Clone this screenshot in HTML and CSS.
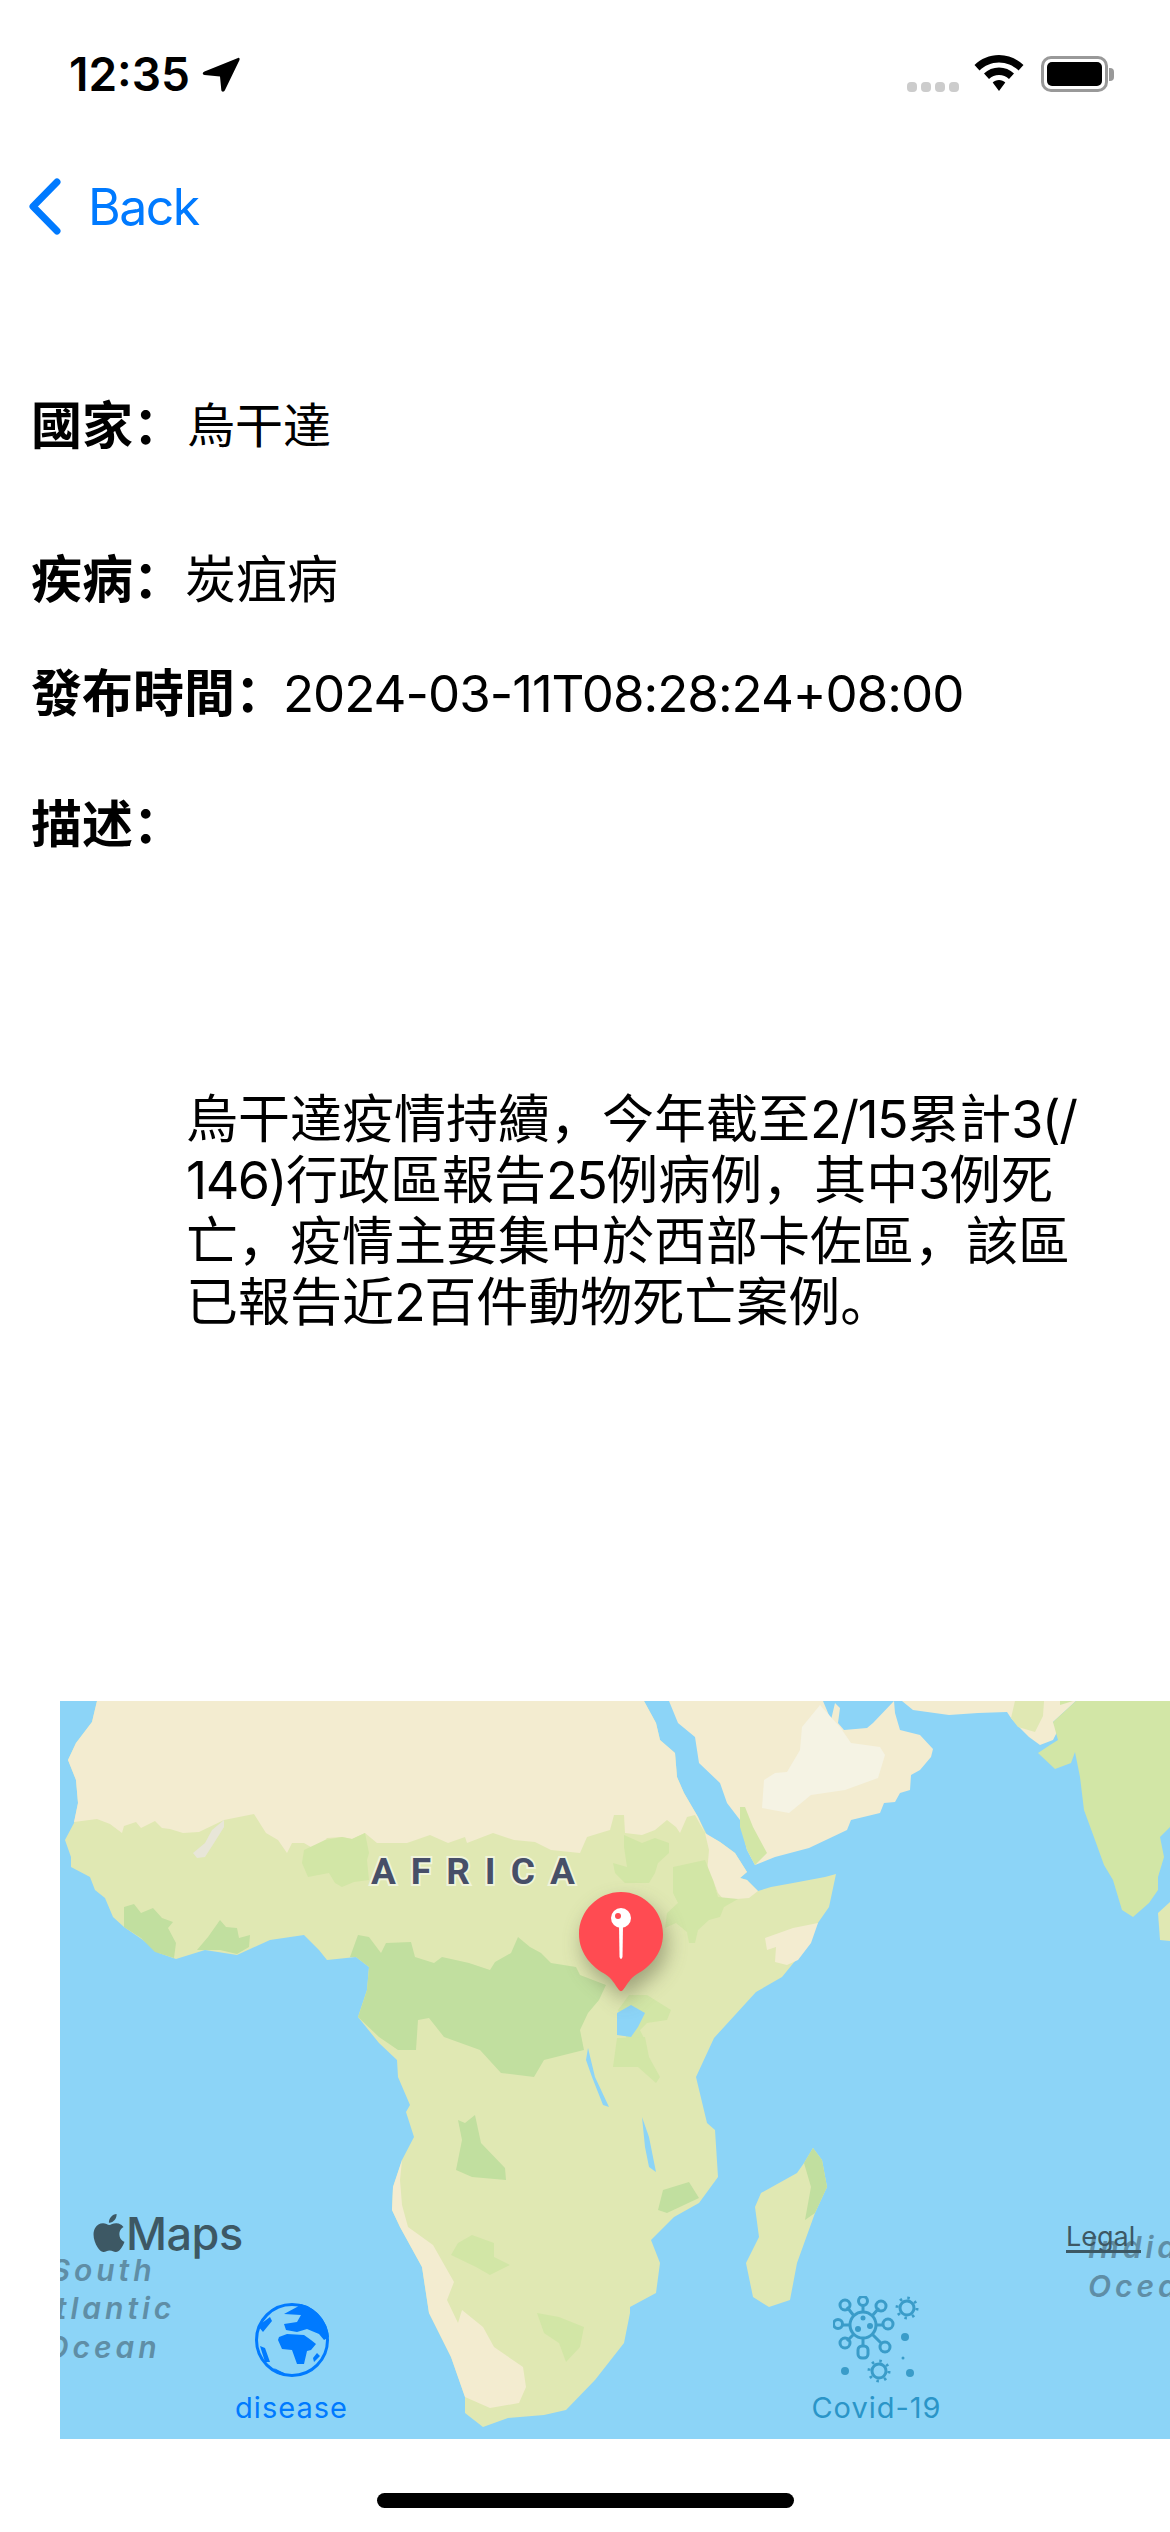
FILE: index.html
```html
<!DOCTYPE html>
<html>
<head>
  <meta charset="utf-8">
  <title>疫情詳情</title>
  <link rel="stylesheet" href="styles.css">
</head>
<body>
  <div class="page">
    <div class="status-bar">
      <div class="status-left">
        <span class="time">12:35</span>
        <svg class="location-arrow" viewBox="0 0 38 36"><path d="M36 1 C37 0.500 38 1.500 37.500 3 L23 33 C22 35.500 19.500 35 19.300 33 L18 19.500 L2.500 18 C0.500 17.800 0 15.500 2.500 14.500 Z"/></svg>
      </div>
      <div class="status-right">
        <div class="signal"><i></i><i></i><i></i><i></i></div>
        <svg class="wifi" viewBox="0 0 50 36"><path d="M25 0 C34.500 0 43 3.800 49.500 10 L44.500 15.500 C39.500 10.600 32.500 7.500 25 7.500 C17.500 7.500 10.500 10.600 5.500 15.500 L0.500 10 C7 3.800 15.500 0 25 0 Z M25 12.500 C30.800 12.500 36 14.800 40 18.500 L35 24 C32.300 21.500 28.800 20 25 20 C21.200 20 17.700 21.500 15 24 L10 18.500 C14 14.800 19.200 12.500 25 12.500 Z M25 25 C27.500 25 29.700 25.900 31.300 27.500 L25 36 L18.700 27.500 C20.300 25.900 22.500 25 25 25 Z"/></svg>
        <div class="battery"><div class="battery-fill"></div></div>
        <div class="battery-cap"></div>
      </div>
    </div>

    <div class="nav-bar">
      <svg class="back-chevron" viewBox="0 0 33 57"><path d="M29 4 L5 28.500 L29 53"/></svg>
      <span class="back-label">Back</span>
    </div>

    <div class="details">
      <div class="row row-country"><span class="label">國家&#xFF1A;</span><span class="value">烏干達</span></div>
      <div class="row row-disease"><span class="label">疾病&#xFF1A;</span><span class="value value-large">炭疽病</span></div>
      <div class="row row-time"><span class="label">發布時間&#xFF1A;</span><span class="timestamp">2024-03-11T08:28:24+08:00</span></div>
      <div class="row row-desc"><span class="label">描述&#xFF1A;</span></div>
      <p class="description">烏干達疫情持續&#xFF0C;今年截至<span class="num">2/15</span>累計<span class="num">3(/</span><br><span class="num">146)</span>行政區報告<span class="num">25</span>例病例&#xFF0C;其中<span class="num">3</span>例死<br>亡&#xFF0C;疫情主要集中於西部卡佐區&#xFF0C;該區<br>已報告近<span class="num">2</span>百件動物死亡案例。</p>
    </div>

    <div class="map">
      <svg class="map-canvas" viewBox="60 1701 1110 738">
        <rect class="water" x="60" y="1701" width="1110" height="738"/>

        <!-- Africa -->
        <polygon class="pale" points="97,1701 92,1722 76,1743 68,1760 76,1780 78,1803 74,1823 65,1840 71,1857 71,1867 90,1877 95,1890 105,1898 113,1917 124,1927 143,1940 159,1953 176,1959 205,1950 237,1955 270,1940 304,1935 319,1950 327,1960 356,1957 369,1967 367,1990 358,2017 379,2043 397,2060 398,2077 410,2105 406,2112 414,2137 402,2160 393,2187 392,2210 400,2227 422,2267 429,2313 451,2357 465,2397 465,2413 483,2427 508,2418 544,2415 566,2410 595,2380 624,2343 630,2313 630,2307 656,2293 660,2263 651,2240 674,2217 699,2203 718,2177 715,2130 707,2123 696,2077 714,2038 756,1992 782,1977 804,1950 813,1930 829,1907 836,1874 825,1877 793,1883 771,1887 758,1891 747,1880 740,1878 747,1872 735,1853 720,1842 707,1835 698,1817 684,1793 677,1777 675,1753 660,1740 656,1723 644,1701"/>
        <polygon class="cream" points="97,1701 92,1722 76,1743 68,1760 76,1780 78,1803 74,1822 97,1819 110,1824 122,1833 124,1826 136,1822 141,1828 155,1821 162,1828 170,1829 183,1833 199,1832 224,1820 254,1814 266,1833 278,1840 287,1853 292,1843 304,1843 316,1850 327,1838 342,1837 352,1839 365,1833 377,1843 407,1843 430,1835 448,1843 465,1837 467,1843 493,1833 514,1840 535,1842 551,1850 580,1853 587,1837 600,1833 610,1830 614,1815 624,1815 625,1833 642,1835 655,1830 667,1820 676,1827 680,1833 687,1817 695,1815 705,1833 698,1817 684,1793 677,1777 675,1753 660,1740 656,1723 644,1701"/>
        <polygon class="cream" points="705,1833 720,1842 735,1853 747,1872 740,1878 747,1880 758,1891 749,1898 724,1900 718,1893 713,1880 707,1873 709,1850"/>
        <polygon class="cream" points="765,1938 793,1928 818,1923 811,1943 798,1960 787,1965 775,1962 776,1947 767,1950"/>
        <polygon class="cream" points="402,2160 393,2187 392,2210 400,2227 422,2267 429,2313 451,2357 465,2397 490,2408 519,2403 526,2387 523,2367 494,2347 483,2327 462,2310 458,2323 447,2300 454,2282 433,2245 408,2227 402,2205 400,2180"/>
        <polygon class="grey" points="193,1853 205,1843 212,1830 224,1820 224,1827 214,1843 205,1857 197,1858"/>
        <polygon class="green" points="124,1907 134,1904 141,1913 153,1908 162,1918 173,1922 168,1928 176,1943 174,1958 155,1952 141,1938 124,1927"/>
        <polygon class="green" points="197,1950 208,1937 220,1920 226,1927 237,1928 239,1938 250,1935 249,1947 237,1954 220,1950"/>
        <polygon class="light" points="302,1863 304,1850 325,1840 342,1837 352,1839 365,1833 369,1853 367,1860 369,1880 354,1882 342,1887 335,1883 329,1873 308,1877"/>
        <polygon class="green" points="350,1957 358,1935 369,1937 381,1953 386,1943 411,1942 415,1957 434,1963 442,1957 469,1963 490,1970 495,1962 511,1953 518,1937 530,1947 541,1953 551,1963 576,1967 580,1975 606,1985 599,2000 588,2013 580,2030 584,2050 544,2060 534,2077 501,2073 480,2050 444,2037 429,2018 418,2020 416,2050 398,2050 379,2037 358,2017 367,1990 369,1967 356,1957"/>
        <polygon class="light" points="624,1835 642,1843 655,1838 669,1843 669,1853 658,1863 655,1873 649,1883 625,1883 615,1873 613,1863 627,1867 624,1847"/>
        <polygon class="light" points="673,1867 705,1860 713,1880 718,1897 738,1899 724,1907 720,1917 709,1920 698,1930 695,1943 689,1943 687,1932 676,1923 665,1928 667,1913 678,1903 673,1893"/>
        <polygon class="light" points="629,1995 647,1995 671,2010 667,2020 647,2023 640,2030 645,2040 627,2040 618,2010"/>
        <polygon class="light" points="617,2038 645,2037 649,2057 660,2077 656,2083 638,2067 613,2067"/>
        <polygon class="green" points="475,2115 481,2143 505,2168 506,2180 472,2177 456,2170 462,2140 458,2120 465,2123"/>
        <polygon class="green" points="689,2182 699,2198 667,2213 658,2210 663,2190"/>
        <polygon class="light" points="472,2235 494,2243 494,2257 510,2265 490,2275 476,2267 451,2255 458,2243"/>
        <polygon class="light" points="537,2313 559,2317 584,2327 580,2347 566,2362 559,2343 544,2333"/>
        <polygon class="water" points="631,2005 645,2013 638,2027 631,2037 617,2035 617,2013"/>
        <polygon class="water" points="588,2048 595,2077 609,2107 603,2105 592,2077 586,2060"/>
        <polygon class="water" points="642,2117 649,2137 656,2172 649,2167 645,2147"/>

        <!-- Madagascar -->
        <polygon class="pale" points="813,2148 822,2160 827,2187 815,2213 797,2263 790,2300 769,2307 753,2297 746,2263 759,2237 755,2207 761,2193 797,2173 804,2163"/>
        <polygon class="green" points="813,2148 822,2160 827,2187 815,2213 805,2220 811,2187 804,2163"/>

        <!-- Arabia and Asia -->
        <polygon class="cream" points="669,1701 678,1723 695,1737 699,1763 720,1783 727,1803 740,1820 747,1850 755,1865 775,1857 809,1848 847,1830 851,1820 880,1813 884,1803 895,1802 900,1793 910,1790 911,1775 920,1770 931,1757 933,1749 920,1735 900,1730 895,1713 894,1701 873,1723 867,1728 844,1730 838,1723 840,1708 835,1703 831,1720 823,1701"/>
        <polygon class="sand" points="782,1701 802,1727 820,1705 840,1727 851,1743 880,1747 885,1755 878,1778 845,1790 811,1795 789,1813 762,1808 764,1780 775,1773 787,1772 800,1750 802,1727"/>
        <polygon class="light" points="740,1807 745,1807 753,1827 767,1853 755,1865 747,1850 740,1827"/>
        <polygon class="cream" points="902,1701 913,1710 949,1715 978,1713 1007,1712 1011,1718 1020,1728 1029,1737 1040,1745 1053,1740 1058,1730 1053,1722 1076,1701"/>
        <polygon class="pale" points="1015,1701 1044,1701 1043,1716 1035,1732 1018,1727 1011,1718"/>
        <polygon class="light" points="1060,1701 1073,1701 1060,1705"/>
        <polygon class="light" points="1076,1701 1170,1701 1170,1827 1160,1837 1164,1857 1158,1877 1158,1890 1149,1903 1133,1917 1122,1910 1113,1880 1104,1865 1095,1840 1084,1810 1080,1777 1075,1752 1071,1763 1055,1769 1038,1753 1050,1745 1058,1740 1053,1722"/>
        <polygon class="pale" points="1170,1902 1158,1913 1160,1940 1170,1941"/>

        <!-- map labels -->
        <text class="place africa" x="371" y="1884">AFRICA</text>
        <text class="sea" text-anchor="middle" x="103" y="2281">South</text>
        <text class="sea" text-anchor="middle" x="103" y="2319">Atlantic</text>
        <text class="sea" text-anchor="middle" x="103" y="2358">Ocean</text>
        <text class="sea" x="1088" y="2258">Indian</text>
        <text class="sea" x="1088" y="2297">Ocean</text>

        <!-- attribution -->
        <svg class="apple" x="90" y="2214" width="38" height="38" viewBox="0 0 24 24"><path d="M12.152 6.896c-.948 0-2.415-1.078-3.96-1.04-2.04.027-3.91 1.183-4.961 3.014-2.117 3.675-.546 9.103 1.519 12.09 1.013 1.454 2.208 3.09 3.792 3.039 1.52-.065 2.09-.987 3.935-.987 1.831 0 2.35.987 3.96.948 1.637-.026 2.676-1.48 3.676-2.948 1.156-1.688 1.636-3.325 1.662-3.415-.039-.013-3.182-1.221-3.22-4.857-.026-3.04 2.48-4.494 2.597-4.559-1.429-2.09-3.623-2.324-4.39-2.376-2-.156-3.675 1.09-4.61 1.09zM15.53 3.83c.843-1.012 1.4-2.427 1.245-3.83-1.207.052-2.662.805-3.532 1.818-.78.896-1.454 2.338-1.273 3.714 1.338.104 2.715-.688 3.559-1.701"/></svg>
        <text class="maps-word" x="126" y="2250">Maps</text>
        <text class="legal" x="1066" y="2246">Legal</text>
        <rect class="legal-line" x="1066" y="2250" width="75" height="3"/>

        <!-- pin -->
        <g class="pin">
          <path class="pin-body" d="M621 1892 C644 1892 663 1911 663 1934 C663 1955 648 1968 637 1974 C630 1978 627 1985 623 1990 C622 1991.500 620 1991.500 619 1990 C615 1985 612 1978 605 1974 C594 1968 579 1955 579 1934 C579 1911 598 1892 621 1892 Z"/>
          <circle class="pin-head" cx="621" cy="1918" r="10"/>
          <path class="pin-head" d="M619 1925 H623 L622.500 1957 Q621 1961 619.500 1957 Z"/>
          <circle class="pin-hole" cx="618" cy="1916" r="3"/>
        </g>
      </svg>

      <div class="tabs">
        <div class="tab tab-disease">
          <svg class="tab-icon globe" viewBox="0 0 76 76">
            <circle class="globe-ring" cx="38" cy="38" r="35.500"/>
            <path d="M47 2 C60 5 73 17 75 35 L70 38 L65 32 L53 27 L43 30 L32 28 L30 22 L43 20 L47 13 L30 12 L43 5 Z"/>
            <path d="M25 35 L33 32 L50 33 L57 38 L62 42 L57 48 L53 49 L50 62 L43 62 L38 48 L28 47 L24 38 Z"/>
            <path d="M4 24 L16 15 L18 19 L9 30 Z M6 44 L11 46 L16 60 L11 60 Z M63 51 L66 54 L60 60 L59 56 Z M20 66 L30 71 L26 73 Z"/>
          </svg>
          <span>disease</span>
        </div>
        <div class="tab tab-covid">
          <svg class="tab-icon virus" viewBox="0 0 88 88">
            <circle class="virus-line" cx="30" cy="29" r="13"/>
            <path class="virus-line" d="M21 20 L14 11 M30 16 V9 M39 20 L46 12 M43 29 H51 M39 38 L48 47 M30 42 V50 M21 38 L14 45 M17 29 H10"/>
            <circle class="virus-line" cx="12" cy="9" r="5"/>
            <circle class="virus-line" cx="30" cy="5" r="4.500"/>
            <circle class="virus-line" cx="48" cy="10" r="5"/>
            <circle class="virus-line" cx="55" cy="28" r="5"/>
            <circle class="virus-line" cx="52" cy="51" r="5"/>
            <rect class="virus-line" x="25" y="50" width="10" height="12" rx="4"/>
            <circle class="virus-line" cx="12" cy="47" r="5"/>
            <circle class="virus-line" cx="5" cy="28" r="4.500"/>
            <circle class="virus-dot" cx="30" cy="22" r="2.500"/>
            <circle class="virus-dot" cx="25" cy="33" r="3"/>
            <circle class="virus-dot" cx="37" cy="30" r="3"/>
            <circle class="virus-line" cx="74" cy="12" r="7"/>
            <circle class="virus-spikes" cx="74" cy="12" r="10"/>
            <circle class="virus-line" cx="46" cy="75" r="7"/>
            <circle class="virus-spikes" cx="46" cy="75" r="10"/>
            <circle class="virus-dot" cx="72" cy="41" r="4"/>
            <circle class="virus-dot" cx="12" cy="75" r="4"/>
            <circle class="virus-dot" cx="77" cy="77" r="4"/>
            <circle class="virus-dot" cx="70" cy="62" r="1.500"/>
          </svg>
          <span>Covid-19</span>
        </div>
      </div>
    </div>

    <div class="home-indicator"></div>
  </div>
</body>
</html>
```

FILE: styles.css
```css
/* page */
body {
  margin: 0;
  background: #fff;
  color: #000;
  font-family: Inter, "Noto Sans CJK SC", sans-serif;
}

.page {
  width: 1170px;
  height: 2532px;
  overflow: hidden;
  display: flex;
  flex-direction: column;
}

/* status bar */
.status-bar {
  height: 150px;
  box-sizing: border-box;
  padding: 55px 56px 0 69px;
  display: flex;
  justify-content: space-between;
  align-items: flex-start;
}

.status-left {
  display: flex;
  align-items: center;
  gap: 12px;
}

.time {
  font-size: 46px;
  line-height: 38px;
  font-weight: 600;
}

.location-arrow {
  width: 38px;
  height: 36px;
  margin-top: 2px;
}

.status-right {
  display: flex;
  align-items: flex-start;
}

.signal {
  display: flex;
  gap: 4px;
  margin-top: 27px;
  margin-right: 15px;
}

.signal i {
  width: 10px;
  height: 10px;
  border-radius: 4px;
  background: #ccc;
}

.wifi {
  width: 50px;
  height: 36px;
  margin-right: 17px;
}

.battery {
  width: 67px;
  height: 36px;
  box-sizing: border-box;
  border: 3px solid #999;
  border-radius: 10px;
  padding: 3px;
  margin-top: 1px;
}

.battery-fill {
  height: 100%;
  background: #000;
  border-radius: 5px;
}

.battery-cap {
  width: 5px;
  height: 13px;
  margin: 13px 0 0 1px;
  background: #999;
  border-radius: 0 4px 4px 0;
}

/* nav */
.nav-bar {
  height: 120px;
  box-sizing: border-box;
  padding: 26px 0 0 28px;
  display: flex;
  align-items: flex-start;
  gap: 27px;
  color: #007aff;
}

.back-chevron {
  width: 33px;
  height: 57px;
  margin-top: 2px;
  fill: none;
  stroke: #007aff;
  stroke-width: 7;
  stroke-linecap: round;
  stroke-linejoin: round;
}

.back-label {
  font-size: 50px;
  line-height: 62px;
  letter-spacing: -1.500px;
}

/* detail rows */
.details {
  padding-left: 31px;
  font-size: 51px;
  height: 1431px;
}

.row {
  height: 60px;
  line-height: 60px;
  display: flex;
}

.row-country { margin-top: 126px; }
.row-disease { margin-top: 94px; }
.row-time { margin-top: 54px; }
.row-desc { margin-top: 71px; }

.label {
  font-weight: 700;
}

.value {
  font-size: 48px;
  margin-left: 3px;
}

.value-large {
  font-size: 51px;
  margin-left: 1px;
}

.timestamp {
  letter-spacing: -1px;
  margin-left: -3px;
}

.description {
  margin: 234px 0 0 155px;
  font-size: 52px;
  line-height: 61px;
}

.num {
  letter-spacing: -1.500px;
}

/* map */
.map {
  position: relative;
  width: 1110px;
  height: 738px;
  margin-left: 60px;
}

.map-canvas {
  display: block;
  width: 1110px;
  height: 738px;
}

.water { fill: #8cd4f7; }
.cream { fill: #f3ecd0; }
.pale { fill: #e0e8b3; }
.light { fill: #d2e6a6; }
.green { fill: #c1df9f; }
.sand { fill: #f5f3e4; }
.grey { fill: #e8e6d8; }

.place {
  font-family: Roboto, sans-serif;
  font-weight: 700;
  fill: #474f68;
  stroke: rgba(255, 255, 255, 0.55);
  stroke-width: 4px;
  paint-order: stroke;
}

.africa {
  font-size: 37px;
  letter-spacing: 15px;
}

.sea {
  font-size: 30px;
  font-style: italic;
  font-weight: 600;
  letter-spacing: 4px;
  fill: #5f8ea6;
}

.apple { fill: #3d5864; }

.maps-word {
  font-size: 45px;
  font-weight: 500;
  letter-spacing: -0.500px;
  fill: #3d5864;
}

.legal {
  font-size: 27px;
  fill: #3d5864;
}

.legal-line { fill: #3d5864; }

.pin { filter: drop-shadow(4px 10px 10px rgba(60, 60, 40, 0.4)); }
.pin-body { fill: #ff4b52; }
.pin-head { fill: #fff; }
.pin-hole { fill: #ff4b52; }

/* tab buttons over the map */
.tabs {
  position: absolute;
  left: 0;
  right: 0;
  top: 595px;
  display: flex;
}

.tab {
  display: flex;
  flex-direction: column;
  align-items: center;
  font-size: 29px;
  line-height: 34px;
  letter-spacing: 1px;
}

.tab-disease {
  width: 111px;
  margin-left: 176px;
  color: #007aff;
}

.tab-covid {
  width: 131px;
  margin-left: 464px;
  color: #2a95c8;
}

.tab-icon {
  width: 76px;
  height: 76px;
  margin-top: 6px;
  margin-bottom: 13px;
}

.globe { fill: #007aff; }

.globe-ring {
  fill: none;
  stroke: #007aff;
  stroke-width: 3;
}

.virus {
  width: 88px;
  height: 88px;
  margin-top: 0;
  margin-bottom: 7px;
  fill: none;
}

.virus-line {
  fill: none;
  stroke: #3a9cc9;
  stroke-width: 3;
}

.virus-dot { fill: #3a9cc9; }

.virus-spikes {
  fill: none;
  stroke: #3a9cc9;
  stroke-width: 3;
  stroke-dasharray: 2.500 5.354;
}

/* home indicator */
.home-indicator {
  width: 417px;
  height: 15px;
  margin: 54px 0 0 377px;
  border-radius: 8px;
  background: #000;
}
```
